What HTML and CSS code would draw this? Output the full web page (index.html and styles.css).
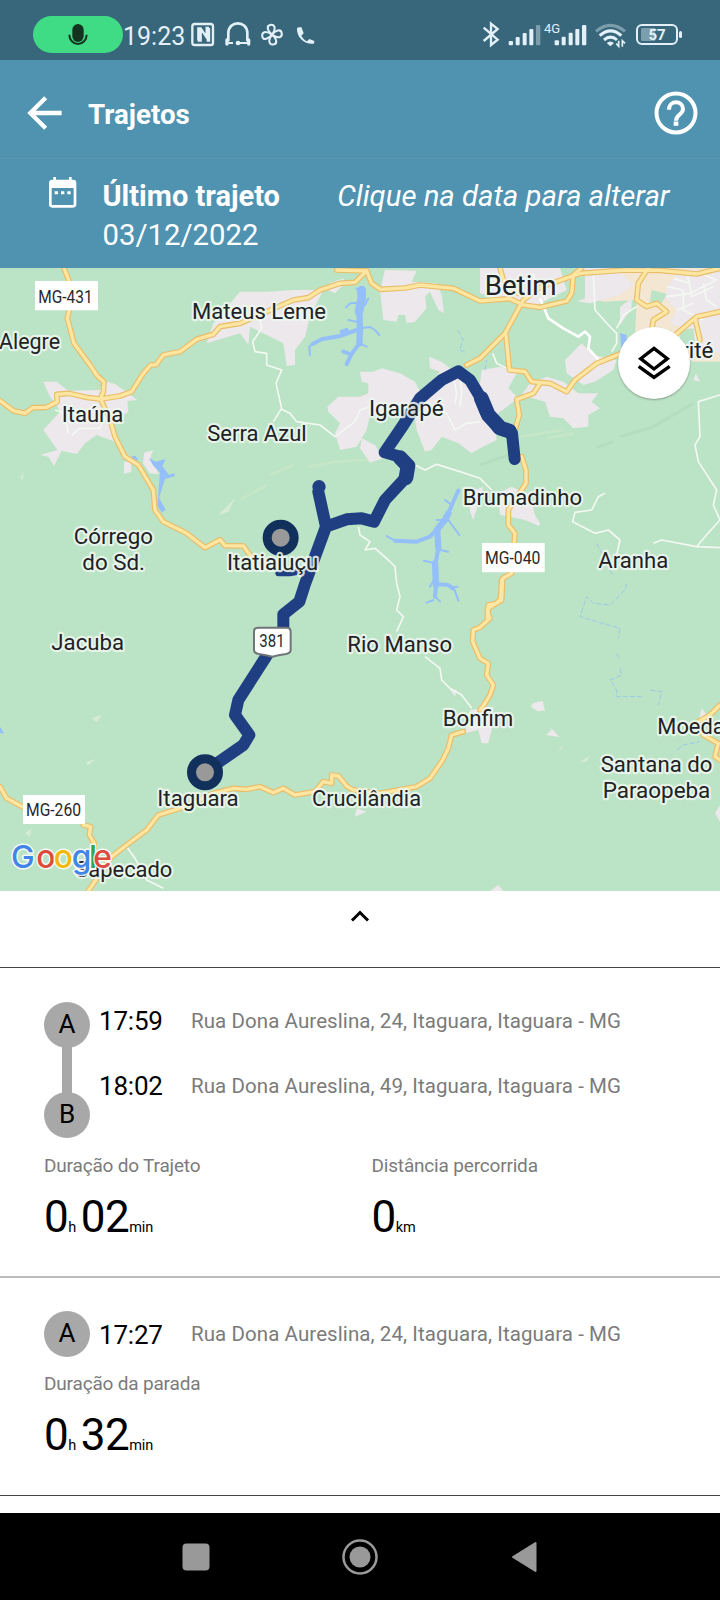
FILE: index.html
```html
<!DOCTYPE html>
<html lang="pt-BR">
<head>
<meta charset="utf-8">
<title>Trajetos</title>
<link rel="stylesheet" href="styles.css">
</head>
<body>
<div class="status">
  <div class="mic-pill">
    <svg width="20" height="24" viewBox="204 66 60 72"><rect x="217" y="69" width="34" height="54" rx="17" fill="#14331f"/><path d="M208 101a26 28 0 0 0 52 0" fill="none" stroke="#14331f" stroke-width="6"/></svg>
  </div>
  <span class="clock">19:23</span>
  <svg class="nfc" width="24" height="30" viewBox="573 60 72 90" fill="none" stroke="#e4f0f8"><rect x="577" y="72" width="62" height="63" rx="7" stroke-width="7"/><path d="M595 121V85h7l18 27V84h7M627 84v38h-7M602 88v34h-9" stroke-width="7"/></svg>
  <svg class="phones" width="26" height="30" viewBox="674 60 78 90" fill="none" stroke="#e4f0f8"><path d="M684 124V100c0-40 57-40 57 0v24" stroke-width="8"/><path d="M680 120v12M745 120v12" stroke-width="10" stroke-linecap="round"/><path d="M684 129h14M715 129h26" stroke-width="6"/><circle cx="713" cy="129" r="7" fill="#e4f0f8" stroke="none"/></svg>
  <svg class="fan" width="24" height="30" viewBox="780 60 72 90" fill="none" stroke="#e4f0f8" stroke-width="6"><path id="blade" d="M816 104C803 94 798 78 810 75c14-3 20 10 6 29z"/><use href="#blade" transform="rotate(90 816 104)"/><use href="#blade" transform="rotate(180 816 104)"/><use href="#blade" transform="rotate(270 816 104)"/></svg>
  <svg class="call" width="20" height="30" viewBox="888 60 60 90"><path d="M891 83l13-2 7 19-7 7c5 9 10 13 17 17l7-7 15 6-1 8c-29 4-53-20-51-48z" fill="#e4f0f8"/></svg>
  <svg class="bt" width="18" height="30" viewBox="366 60 54 90" fill="none" stroke="#e4f0f8" stroke-width="7"><path d="M371 83l42 36-20 16V71l20 16-42 36"/></svg>
  <svg class="sig1" width="33" height="30" viewBox="445 60 99 90" fill="#e4f0f8"><rect x="447" y="123" width="13" height="13" rx="3"/><rect x="468" y="111" width="12" height="25" rx="3"/><rect x="489" y="99" width="12" height="37" rx="3"/><rect x="509" y="87" width="12" height="49" rx="3"/><rect x="529" y="75" width="13" height="61" rx="3" opacity=".4"/></svg>
  <span class="net">4G</span>
  <svg class="sig2" width="33" height="30" viewBox="583 60 99 90" fill="#e4f0f8"><rect x="585" y="121" width="13" height="15" rx="3"/><rect x="606" y="110" width="12" height="26" rx="3"/><rect x="627" y="98" width="12" height="38" rx="3"/><rect x="647" y="87" width="12" height="49" rx="3"/><rect x="667" y="75" width="13" height="61" rx="3"/></svg>
  <svg class="wifi" width="32" height="30" viewBox="705 60 96 90" fill="none" stroke="#e4f0f8" stroke-width="9"><path d="M708 94q43-36 87 0" opacity=".4"/><path d="M719 107q33-29 65 0M732 120q20-17 39 0"/><path d="M740 129q11-9 22 0l-11 10z" fill="#e4f0f8" stroke="none"/><path d="M776 122v17l-7-8M787 140v-18l8 8" stroke-width="5"/></svg>
  <div class="battery">57</div>
</div>

<header class="appbar">
  <svg class="back" width="36" height="36" viewBox="81 285 108 108" fill="none" stroke="#fff" stroke-width="13"><path d="M185 339H90M137 293l-46 46 46 46"/></svg>
  <h1>Trajetos</h1>
  <svg class="help" width="44" height="44" viewBox="883 273 132 132" fill="none" stroke="#fff"><circle cx="949" cy="339" r="58.500" stroke-width="12"/><path d="M928 329c0-30 42-28 42-2 0 17-21 16-21 35" stroke-width="12"/><path d="M942 371h14" stroke-width="13"/></svg>
</header>
<section class="datebar">
  <svg class="cal" width="28" height="32" viewBox="146 532 84 96"><path d="M156 540h62q10 0 10 10v64q0 10-10 10h-62q-10 0-10-10v-64q0-10 10-10z" fill="#fff"/><rect x="154" y="565" width="66" height="51" rx="2" fill="#5093b1"/><path d="M163 532v12M210 532v12" stroke="#fff" stroke-width="8"/><path d="M163 579h10M182 579h10M201 579h10" stroke="#fff" stroke-width="9"/></svg>
  <div class="last"><strong>Último trajeto</strong><span>03/12/2022</span></div>
  <em>Clique na data para alterar</em>
</section>

<main class="map">
<svg class="canvas" viewBox="0 804 2160 1869" width="720" height="623">
  <defs>
    <!-- trunk roads, drawn twice: casing then fill -->
    <g id="roads">
      <path d="M192 804L208 845 210 920 202 955 222 1030 270 1095 292 1128 312 1145 310 1175 302 1195"/>
      <path d="M0 1202L40 1232 75 1240 98 1223 140 1222 172 1205 170 1183 205 1180 265 1193 302 1197 360 1188 395 1175 430 1120 452 1095 468 1094 490 1065 540 1055 590 1018 640 1003 660 980 720 970 800 935 880 900 925 893 960 870 1020 850 1065 847 1100 813 1010 810"/>
      <path d="M302 1197L332 1265 345 1310 375 1370 415 1395 460 1470 465 1530 490 1565 560 1600 615 1643 660 1619 675 1637 730 1638 752 1668"/>
      <path d="M1100 813L1115 850 1142 868 1215 864 1260 855 1360 865 1440 903 1530 896 1570 915 1620 922 1700 903 1715 880 1720 825 1745 804"/>
      <path d="M1400 1095L1440 1075 1515 1000 1570 900 1620 862 1740 820 1880 810 1980 811 2090 822 2160 805"/>
      <path d="M1518 1005L1528 1110 1575 1115 1595 1145 1650 1150 1700 1175 1725 1140 1790 1090 1860 1062"/>
      <path d="M1620 1150L1600 1180 1550 1198 1558 1245 1545 1290M1565 1370L1578 1410 1578 1450 1525 1530 1525 1575 1545 1600 1535 1720 1508 1735 1505 1800 1465 1825 1462 1855"/>
      <path d="M1505 1740L1502 1795 1490 1810 1465 1815 1462 1835 1470 1855 1440 1882 1420 1890 1418 1925 1440 1975 1465 1990 1460 2025 1480 2055 1470 2085 1455 2110 1440 2130M1390 2195L1355 2205 1345 2245 1325 2285 1290 2335 1250 2360 1140 2380 1060 2370 1042 2360 1015 2328 995 2325 995 2350 970 2345 945 2375 885 2385 850 2365 820 2378 780 2360 740 2368 700 2365 640 2380 540 2425 475 2445 440 2490 380 2535 335 2570 265 2673"/>
      <path d="M1945 804L1915 850 1910 900 1940 920 1970 910 2000 935 1960 960 1955 990"/>
      <path d="M2020 1010L2090 950 2160 935M2085 955L2100 1020M0 2360L20 2395 85 2430M250 2475L272 2480 268 2505 283 2530 280 2560"/>
      <path d="M2160 2115L2130 2145 2095 2165 2110 2205 2155 2230 2145 2270 2160 2280"/>
      <path d="M1500 804L1510 840 1555 880"/>
    </g>
  </defs>
  <rect x="0" y="804" width="2160" height="1869" fill="#bbe3c5"/>

  <!-- relief -->
  <g class="relief">
    <path class="pale" d="M720 1500L800 1455M810 1425L880 1395M925 1400L1010 1385 1100 1380M1560 1310L1690 1290M1640 1315L1720 1300" />
    <path d="M1860 1310L1960 1280 2080 1210M1790 1342L1840 1325M1440 1395L1540 1360" />
  </g>

  <!-- built-up areas -->
  <g class="urban">
    <path d="M130 1145H170L205 1172 300 1170 320 1145 345 1152 385 1180 412 1200 382 1203 385 1235 340 1265 345 1325 290 1305 255 1330 230 1362 185 1352 162 1398 145 1370 120 1365 172 1350 130 1290 180 1235 170 1215 150 1190zM372 1385h22v30l-22 7zM432 1358l28-8-10 25 27 48-28-3-20-30z"/>
    <path d="M620 1030L640 970 720 875 800 875 880 870 970 870 930 950 915 1010 885 1050 885 1095 860 1098 850 1030 750 980 745 1035 720 1000zM990 850l40-15 5 15-30 30-20-10z"/>
    <path d="M1140 870L1155 810 1250 812 1235 845 1310 850 1325 885 1332 940 1315 930 1290 875 1275 890 1280 925 1245 965 1220 970 1215 945 1195 945 1190 965 1150 960z"/>
    <path d="M1080 1115H1118L1145 1105 1200 1120 1245 1145 1260 1175 1240 1215 1110 1245 1100 1290 1070 1340 1020 1350 1005 1300 1020 1270 985 1235 982 1220 1015 1190 1080 1190 1105 1180 1105 1150 1085 1145zM1085 1315L1125 1335 1150 1375 1110 1388 1080 1345zM1287 1070L1325 1085 1370 1120 1420 1160 1440 1150 1445 1110 1500 1100 1550 1120 1525 1165 1555 1195 1480 1250 1490 1320 1440 1345 1415 1360 1375 1330 1325 1310 1295 1350 1275 1355 1250 1290 1245 1260 1265 1180 1320 1115 1290 1105z"/>
    <path d="M1440 804H1680L1700 870 1600 920 1500 900 1440 880z"/>
    <path d="M1695 1080L1745 1030 1780 1065 1850 1080 1840 1110 1785 1145 1750 1155 1700 1120zM1590 1150L1640 1130 1690 1145 1735 1180 1795 1180 1775 1205 1800 1225 1765 1245 1765 1280 1720 1285 1690 1255 1650 1250 1635 1205 1565 1185z"/>
    <path class="sand" d="M1770 804H2160V1085H2080L1990 1020 1905 1010 1910 900 1810 905 1760 885z"/>
    <path d="M1750 804H1850L1900 854 1860 885 1770 910 1735 905 1735 850zM2000 860L2040 810H2160V1060L2100 1040 2040 980 2010 970 2030 930 1995 895zM1860 920L1895 895V925L1860 975z"/>
    <path d="M1495 1480L1535 1460 1590 1485 1605 1545 1620 1570 1618 1578 1575 1560 1500 1545zM1410 1475l40-15-30 100-10-25zM1550 2122M2105 2125l30 40-40 0zM1638 2205l15-14-7-8 14 8 18 20zM1598 2110l30-8 7 30-22 2-20-14zM1410 2130l70-10-5 70-10 40-20 0-10-40-40 10z"/>
    <path d="M880 1805l30-20 5 25-30 30zM1070 2425l30 10-35 15zM1470 2673l25-18 15 18zM2145 2440l15-25v50zM2080 1140l8-20 12 25zM1350 2070l20 0-5 20z"/>
    <path class="patch" d="M1725 840L1755 825V895L1720 910zM1955 870L2000 882 1985 910 1950 905zM2040 990L2080 985 2085 1030 2040 1035z"/>
    <path class="patch light" d="M275 2155l30-10-15 22zM258 2285l30-8-25 20zM75 2500l20-15-5 25zM1673 2255l17-22-3 12zM1740 2285l30-18-10 18zM655 1545l50-50-20 40zM60 1435l12-20-5 25z"/>
  </g>

  <!-- minor roads -->
  <g class="minor">
    <path d="M780 960L785 985 758 1025 765 1055 800 1060 800 1095 845 1110 828 1150 845 1225 820 1265M845 1228L870 1240 890 1265 960 1275 1005 1310 1065 1265 1080 1230 1110 1220"/>
    <path d="M1245 1395L1275 1410 1310 1393 1380 1415 1440 1435 1475 1470M1075 1580L1080 1605 1110 1625 1095 1650 1125 1645 1165 1680 1185 1700 1190 1750 1200 1790 1190 1830 1210 1850 1190 1895M1275 1970L1320 2005 1325 2040 1350 2065 1385 2085 1415 2125"/>
    <path class="wide" d="M1620 895L1645 955 1690 985 1735 1010 1755 995 1770 1010 1765 1045 1800 1085"/>
    <path d="M1780 820L1785 930 1825 975 1850 1000 1850 1030 1835 1055M1850 985L1870 945 1910 920M1478 1060L1490 1090 1525 1108"/>
    <path d="M1360 1130L1370 1180 1365 1210M1380 1130L1385 1180 1380 1220M1300 1220L1340 1240 1365 1290 1400 1270 1440 1265M1440 1210L1490 1250"/>
    <path d="M1815 1480L1795 1490 1775 1530 1725 1537 1718 1565 1785 1600 1825 1590 1860 1620 1850 1665M1960 1630L1985 1620 2090 1640 2115 1610 2160 1560 2140 1515 2150 1470 2095 1385 2085 1335 2100 1310 2095 1205 2160 1185M2090 1640L2160 1643M380 2540L405 2575 440 2640 490 2665"/>
    <path d="M2000 860L2050 870 2050 930 2110 960M2000 890L2070 880 2150 840 2100 820M2060 810L2075 890 2140 860M2110 850L2120 900 2150 920M2030 930L2080 910M2020 835L2070 850M205 1300L195 1240 165 1230M215 1305L240 1285 300 1285 320 1230M1600 820L1610 860 1640 900"/>
  </g>

  <!-- reservoirs and streams -->
  <g class="water">
    <path d="M395 1368l12 0 8 12-15 6zM447 1375l20 10 30-8-10 22 20 25 18-5-2 10-28 8-18 57 20 35-12 8-13-20 8-100-20-20z"/>
    <path class="lake w24" d="M1085 870L1085 895 1077 935"/>
    <path class="lake w18" d="M1078 930L1080 990 1078 1030"/>
    <path class="lake w12" d="M1078 1030L1056 1060 1040 1092M1070 990L1020 1008 965 1018 938 1032M1045 1060L1030 1055M1040 990L1025 995"/>
    <path class="lake w7" d="M938 1030L928 1040 930 1065M1080 985L1110 981 1125 990 1138 1005M1038 922L1050 910 1075 908M1070 865L1085 885M1045 960L1070 965M1105 895L1095 915M1100 1040L1080 1030"/>
    <path class="lake w18" d="M1345 1540L1335 1560 1310 1590M1312 1595L1315 1645M1305 1690L1308 1755"/>
    <path class="lake w12" d="M1375 1472L1362 1500 1345 1540M1310 1590L1290 1610 1250 1625 1185 1622M1315 1645L1305 1700M1308 1755L1305 1790M1308 1752L1345 1755 1358 1765"/>
    <path class="lake w7" d="M1185 1622L1160 1608M1345 1560L1378 1605M1355 1515L1335 1500M1320 1650L1345 1655M1305 1690L1272 1682M1305 1735L1290 1760M1300 1800L1280 1808M1305 1790L1320 1805M1355 1762L1372 1760M1362 1765L1375 1802M1330 1560L1310 1560"/>
    <path d="M0 2180l12 20-12 0zM1860 1000l20 5 0 50-15-5z"/>
    <path class="stream" d="M1374 990l15 30-10 30 15 5M1455 1110L1460 1080M1880 1750l-5 20-45 45-50-5-20-20-20 60 50 15 70 20-5 30M1850 1960l10 20M1860 2005l5 20-35 15 20 30 0 20 75 0M1950 2070l35 5-10 40M2030 2250l20-15 50-10M1790 1630l50 100"/>
  </g>

  <use href="#roads" class="casing"/>
  <use href="#roads" class="fill"/>

  <!-- travelled route -->
  <g transform="translate(720 795)">
    <path class="route" d="M824 582L816 505 775 490 737 440 717 390 690 345 655 319 605 345 540 400 490 480 434 562 470 572 505 600 500 635 435 705 402 770 365 760 320 763 258 785 235 680M258 785L195 957 178 1010 130 1048 130 1100 78 1175 -5 1305 -15 1350 28 1410 10 1440 -105 1520"/>
    <path class="route thick" d="M504 602L498 638M724 400L745 450 782 490 808 498M480 578L503 602"/>
    <circle class="tip" cx="237" cy="665" r="20"/>
    <path class="trace" d="M115 925h35l20-4"/>
    <circle class="pin" cx="122" cy="818" r="40.500"/>
    <circle class="pin" cx="-105" cy="1522" r="40.500"/>
  </g>

  <!-- road shields -->
  <g class="shield">
    <path d="M105 843h189v88H105zM1446 1629h188v88h-188zM69 2385h186v87H69z"/>
    <path class="br" d="M762 1895q0-12 12-12h86q12 0 12 12v54q0 10-14 13-24 3-41 8-17-5-41-8-14-3-14-13z"/>
    <text x="115" y="908" textLength="163" lengthAdjust="spacingAndGlyphs">MG-431</text>
    <text x="1455" y="1692" textLength="166" lengthAdjust="spacingAndGlyphs">MG-040</text>
    <text x="78" y="2448" textLength="165" lengthAdjust="spacingAndGlyphs">MG-260</text>
    <text x="778" y="1940" textLength="76" lengthAdjust="spacingAndGlyphs">381</text>
  </g>

  <!-- place names -->
  <g class="place">
    <text x="-3" y="1047" textLength="183" lengthAdjust="spacingAndGlyphs">Alegre</text>
    <text x="185" y="1267" textLength="185" lengthAdjust="spacingAndGlyphs">Itaúna</text>
    <text x="576" y="956" textLength="402" lengthAdjust="spacingAndGlyphs">Mateus Leme</text>
    <text x="622" y="1322" textLength="298" lengthAdjust="spacingAndGlyphs">Serra Azul</text>
    <text x="1107" y="1248" textLength="224" lengthAdjust="spacingAndGlyphs">Igarapé</text>
    <text class="big" x="1454" y="885" textLength="216" lengthAdjust="spacingAndGlyphs">Betim</text>
    <text x="1388" y="1514" textLength="358" lengthAdjust="spacingAndGlyphs">Brumadinho</text>
    <text x="1795" y="1704" textLength="210" lengthAdjust="spacingAndGlyphs">Aranha</text>
    <text x="1990" y="1074" textLength="150" lengthAdjust="spacingAndGlyphs">birité</text>
    <text x="221" y="1633" textLength="238" lengthAdjust="spacingAndGlyphs">Córrego</text>
    <text x="247" y="1711" textLength="188" lengthAdjust="spacingAndGlyphs">do Sd.</text>
    <text x="681" y="1710" textLength="274" lengthAdjust="spacingAndGlyphs">Itatiaiuçu</text>
    <text x="154" y="1949" textLength="218" lengthAdjust="spacingAndGlyphs">Jacuba</text>
    <text x="1042" y="1957" textLength="314" lengthAdjust="spacingAndGlyphs">Rio Manso</text>
    <text x="1328" y="2178" textLength="212" lengthAdjust="spacingAndGlyphs">Bonfim</text>
    <text x="472" y="2417" textLength="244" lengthAdjust="spacingAndGlyphs">Itaguara</text>
    <text x="936" y="2419" textLength="327" lengthAdjust="spacingAndGlyphs">Crucilândia</text>
    <text x="1972" y="2202" textLength="202" lengthAdjust="spacingAndGlyphs">Moeda</text>
    <text x="1802" y="2316" textLength="335" lengthAdjust="spacingAndGlyphs">Santana do</text>
    <text x="1808" y="2394" textLength="323" lengthAdjust="spacingAndGlyphs">Paraopeba</text>
    <text x="226" y="2631" textLength="291" lengthAdjust="spacingAndGlyphs">Sapecado</text>
  </g>
  <text class="google" y="2604"><tspan x="33" fill="#4285e8">G</tspan><tspan x="109" fill="#dc4b3e">o</tspan><tspan x="161" fill="#f2b90c">o</tspan><tspan x="215" fill="#4285e8">g</tspan><tspan x="267" fill="#35a354">l</tspan><tspan x="280" fill="#dc4b3e">e</tspan></text>
</svg>
<button class="layers" aria-label="Camadas">
  <svg width="34" height="36" viewBox="471 242 102 108" fill="none" stroke="#000" stroke-width="10"><path d="M522 252l40 31-40 31-40-31zM476 306l46 33 47-33"/></svg>
</button>
</main>

<div class="handle"><svg width="20" height="14" viewBox="0 0 20 14" fill="none" stroke="#000" stroke-width="3"><path d="M2 11.500l8-8 8 8"/></svg></div>

<section class="trip">
  <div class="stops">
    <div class="rail"><span class="dot">A</span><span class="link"></span><span class="dot">B</span></div>
    <div class="rows">
      <div class="row"><time>17:59</time><span class="addr">Rua Dona Aureslina, 24, Itaguara, Itaguara - MG</span></div>
      <div class="row"><time>18:02</time><span class="addr">Rua Dona Aureslina, 49, Itaguara, Itaguara - MG</span></div>
    </div>
  </div>
  <div class="stats">
    <div class="stat"><span class="label">Duração do Trajeto</span><div class="value">0<small class="h">h</small>02<small>min</small></div></div>
    <div class="stat"><span class="label">Distância percorrida</span><div class="value">0<small>km</small></div></div>
  </div>
</section>
<section class="trip stop">
  <div class="stops">
    <div class="rail"><span class="dot">A</span></div>
    <div class="rows"><div class="row"><time>17:27</time><span class="addr">Rua Dona Aureslina, 24, Itaguara, Itaguara - MG</span></div></div>
  </div>
  <div class="stats">
    <div class="stat"><span class="label">Duração da parada</span><div class="value">0<small class="h">h</small>32<small>min</small></div></div>
  </div>
</section>
<div class="spacer"></div>
<nav class="sysnav">
  <svg width="36" height="36" viewBox="0 0 36 36"><rect x="4.500" y="4.500" width="27" height="27" rx="4" fill="#999"/></svg>
  <svg width="36" height="36" viewBox="0 0 36 36"><circle cx="18" cy="18" r="16.500" fill="none" stroke="#999" stroke-width="2.500"/><circle cx="18" cy="18" r="10.500" fill="#999"/></svg>
  <svg width="36" height="36" viewBox="0 0 36 36"><path d="M7 18L29.500 4v28z" fill="#999" stroke="#999" stroke-width="2" stroke-linejoin="round"/></svg>
</nav>
</body>
</html>
```
FILE: styles.css
```css
* { box-sizing: border-box; }
body { margin: 0; width: 720px; height: 1600px; overflow: hidden; display: flex; flex-direction: column; background: #fff; color: #000; font-family: Roboto, "Noto Sans", sans-serif; }
body > * { flex-shrink: 0; }
svg { display: block; flex-shrink: 0; }

.status { height: 60px; background: #38677b; display: flex; align-items: flex-start; padding: 20px 38px 0 33px; color: #e4f0f8; }
.mic-pill { width: 90px; height: 37px; margin-top: -4px; border-radius: 19px; background: #40dc85; display: flex; align-items: center; justify-content: center; }
.clock { font-size: 25px; line-height: 33px; width: 68px; }
.phones { margin-left: 10px; }
.fan { margin-left: 9px; }
.call { margin-left: 12px; }
.bt { margin-left: auto; }
.sig1 { margin-left: 8px; }
.net { font-size: 13px; line-height: 17px; width: 17px; margin-left: 3px; margin-right: -7px; }
.wifi { margin-left: 8px; }
.battery { position: relative; width: 42px; height: 21px; margin: 4px 4px 0 9px; border: 2px solid #e4f0f8; border-radius: 6px; font-size: 15px; font-weight: 700; line-height: 14px; text-align: center; background: linear-gradient(90deg, #7b9dac 45%, transparent 45%) content-box; padding: 2px 3px; }
.battery::after { content: ""; position: absolute; right: -6px; top: 5px; width: 3px; height: 7px; border-radius: 2px; background: #e4f0f8; }

.appbar { height: 98px; background: #5093b1; display: flex; align-items: center; padding: 8px 22px 0 27px; color: #fff; }
.appbar h1 { margin: 3px 0 0 25px; font-size: 27.700px; font-weight: 700; line-height: 36px; }
.help { margin-left: auto; }
.datebar { height: 110px; background: #5093b1; border-top: 1px solid #5a94b0; display: flex; align-items: flex-start; padding: 18px 50.500px 0 48.500px; color: #fff; }
.last { display: flex; flex-direction: column; margin-left: 26px; font-size: 29.300px; line-height: 39px; }
.last strong { font-size: 29px; }
.datebar em { margin-left: auto; font-size: 29.300px; line-height: 38px; }

.map { position: relative; height: 623px; overflow: hidden; }
.urban { fill: #ece8eb; }
.urban .sand { fill: #f3e6d2; }
.urban .patch { fill: #bbe3c5; }
.urban .light { fill: #d5ebd3; }
.relief { fill: none; stroke: #aed8ba; stroke-width: 8; opacity: .5; }
.relief .pale { stroke: #cfeccc; }
.water { fill: #94bff8; }
.lake { fill: none; stroke: #94bff8; stroke-linejoin: round; stroke-linecap: round; }
.w24 { stroke-width: 26; }
.w18 { stroke-width: 19; }
.w12 { stroke-width: 12; }
.w7 { stroke-width: 6; }
.water .stream { fill: none; stroke: #9cc9e8; stroke-width: 3; stroke-dasharray: 16 6; }
.minor { fill: none; stroke: #f4f8f2; stroke-width: 5; stroke-linejoin: round; }
.minor .wide { stroke-width: 8; stroke: #fff; }
.casing, .fill { fill: none; stroke-linejoin: round; stroke-linecap: round; }
.casing { stroke: #e9bd69; stroke-width: 17; }
.fill { stroke: #fce6a2; stroke-width: 10; }
.route { fill: none; stroke: #1f3f82; stroke-width: 36; stroke-linejoin: round; stroke-linecap: round; }
.route.thick { stroke-width: 44; }
.tip { fill: #1f3f82; }
.trace { fill: none; stroke: #1f3f82; stroke-width: 18; stroke-linecap: round; }
.pin { fill: #999; stroke: #12305c; stroke-width: 27; }
.shield path { fill: #fff; }
.shield .br { stroke: #70757a; stroke-width: 6; }
.shield text { font-size: 54px; fill: #27292c; }
.place { font-size: 68px; fill: #202226; stroke: #eff7f0; stroke-opacity: .85; stroke-width: 13; stroke-linejoin: round; paint-order: stroke; }
.place .big { font-size: 82px; }
.google { font-family: Inter, sans-serif; font-size: 95px; font-weight: 500; stroke: #fff; stroke-width: 9; stroke-linejoin: round; stroke-opacity: .85; paint-order: stroke; }
.layers { position: absolute; left: 618px; top: 59px; width: 72px; height: 72px; border: 0; padding: 0; border-radius: 50%; background: #fff; box-shadow: 0 1px 2px rgba(0,0,0,.3); display: flex; align-items: center; justify-content: center; }

.handle { height: 77px; border-bottom: 1px solid #444; display: flex; justify-content: center; padding-top: 18px; }
.trip { height: 310px; border-bottom: 2px solid #bbb; padding: 34px 44px 0; }
.trip.stop { height: 218px; padding-top: 33px; border-bottom: 1px solid #444; }
.stops { display: flex; }
.rail { width: 46px; display: flex; flex-direction: column; align-items: center; }
.dot { width: 46px; height: 46px; border-radius: 50%; background: #a8a8a8; font-size: 26px; line-height: 44px; text-align: center; }
.link { width: 10px; height: 46px; margin: -1px 0; background: #a8a8a8; }
.rows { padding-left: 9px; }
.row { display: flex; height: 65px; }
.stop .row { height: 46px; padding-top: 4px; }
.row time { width: 92px; font-size: 26px; line-height: 38px; letter-spacing: -.2px; }
.stop time { padding-top: 1px; }
.addr { font-size: 20.500px; line-height: 38px; color: #7b7b7b; letter-spacing: .08px; white-space: nowrap; }
.stats { display: flex; padding-top: 15px; }
.stop .stats { padding-top: 14px; }
.stat { flex: none; width: 327.500px; }
.label { display: block; font-size: 19px; line-height: 26px; color: #7b7b7b; letter-spacing: -.18px; }
.value { font-size: 44px; line-height: 52px; margin-top: 12px; letter-spacing: -.4px; }
.value small { font-size: 14.500px; letter-spacing: -.2px; }
.value .h { margin-right: 4.500px; }
.spacer { height: 17px; }
.sysnav { height: 87px; background: #000; display: flex; align-items: center; justify-content: center; gap: 128px; }
```
